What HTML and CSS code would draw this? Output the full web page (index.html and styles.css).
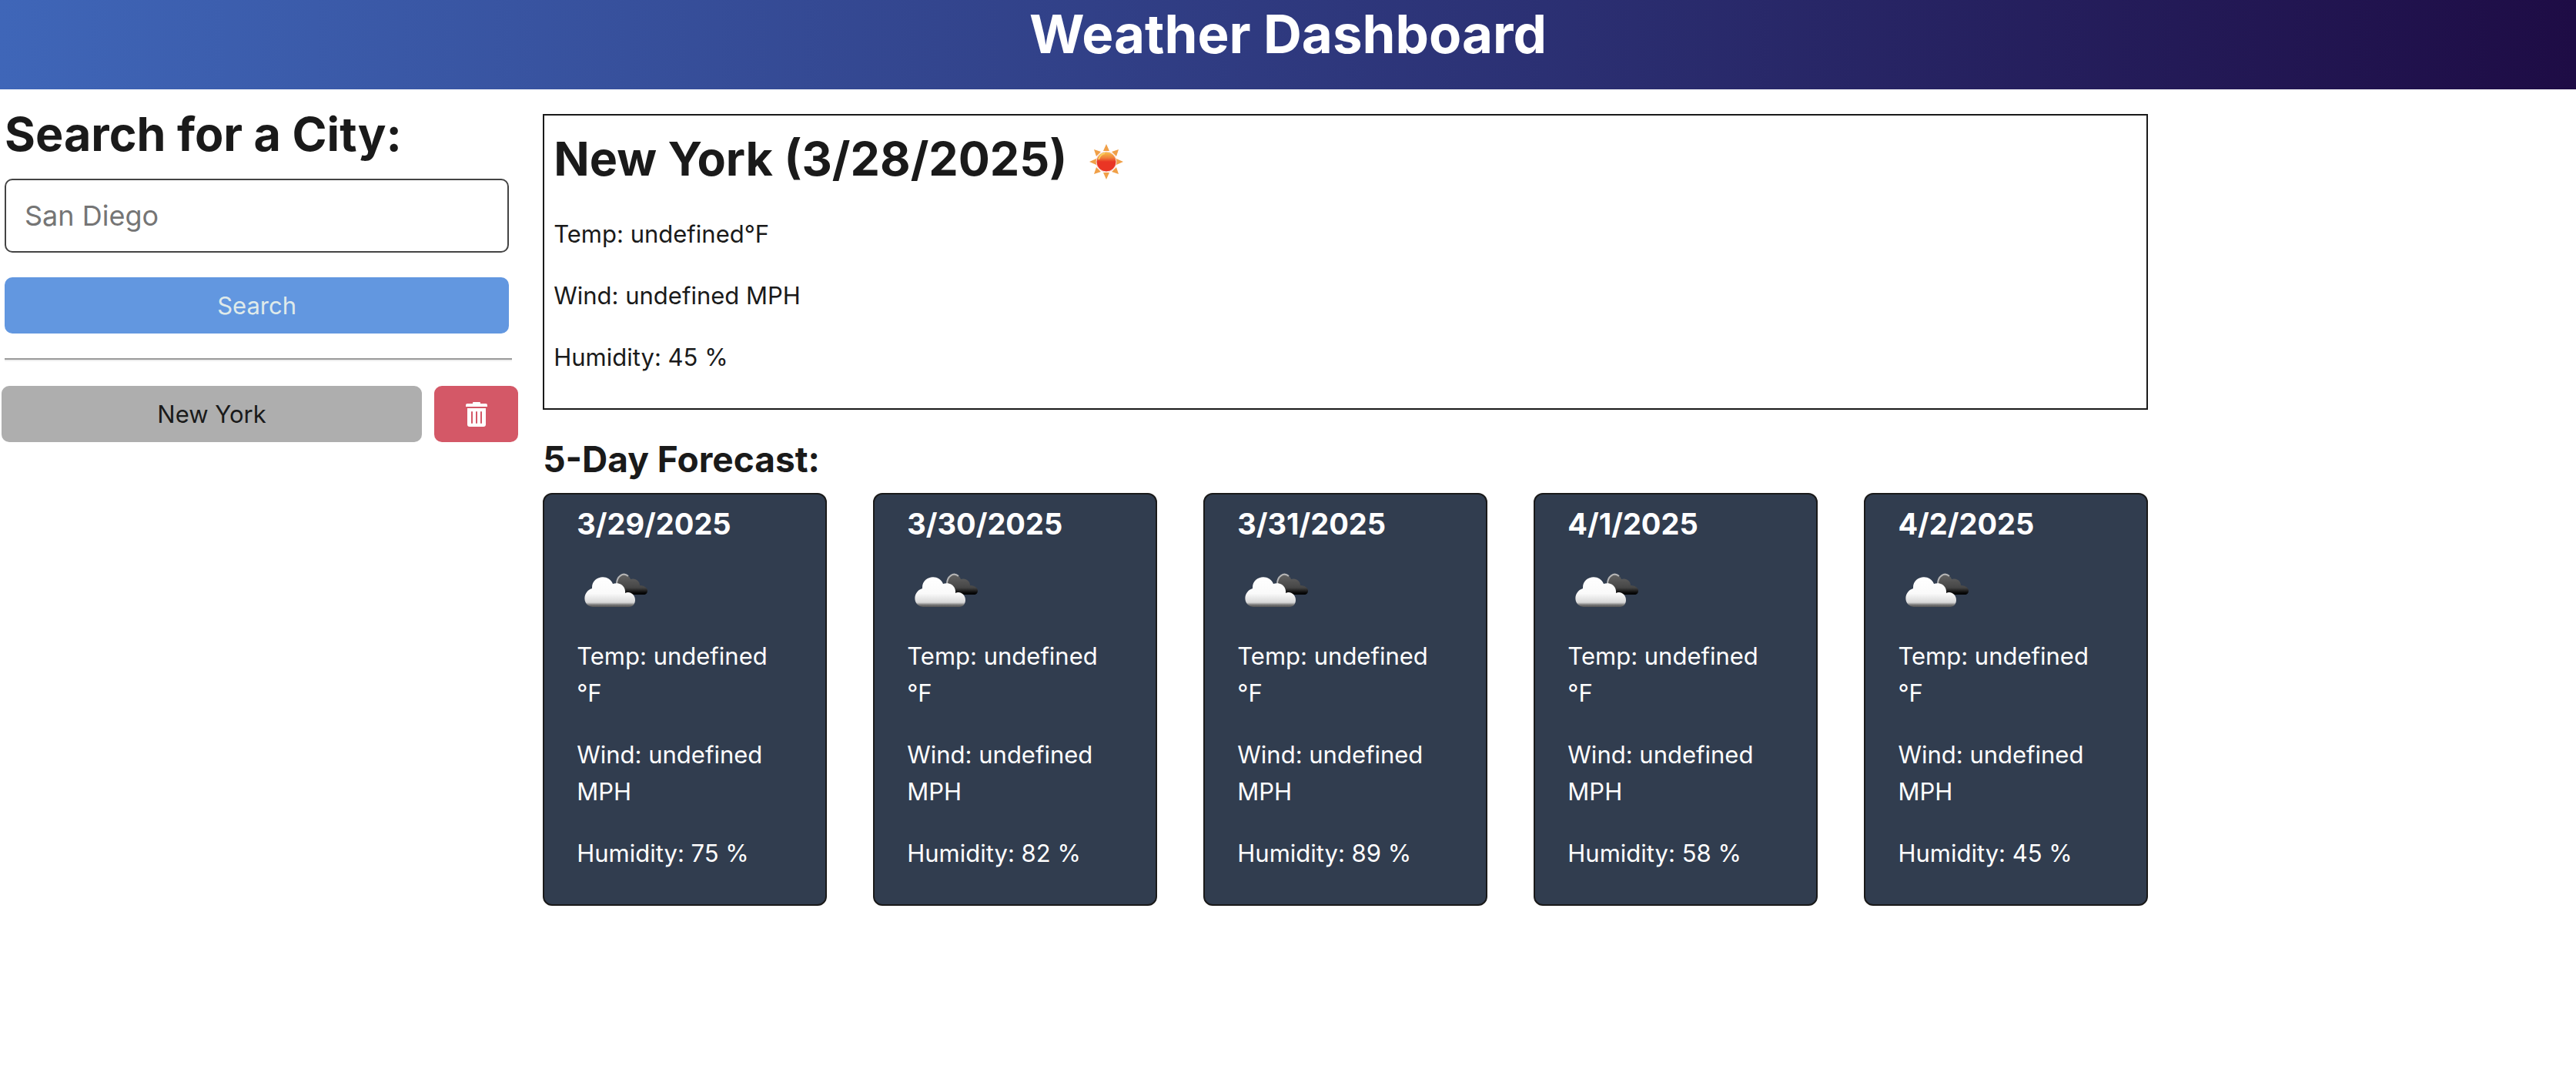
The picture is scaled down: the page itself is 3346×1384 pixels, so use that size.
FILE: index.html
```html
<!DOCTYPE html>
<html lang="en">
<head>
<meta charset="utf-8">
<meta name="viewport" content="width=device-width, initial-scale=1">
<title>Weather Dashboard</title>
<link rel="stylesheet" href="styles.css">
</head>
<body>
<svg class="defs" aria-hidden="true">
  <defs>
    <linearGradient id="cloud-light" x1="0" y1="0" x2="0" y2="1">
      <stop offset="0" stop-color="#fff"/><stop offset=".55" stop-color="#fafafa"/>
      <stop offset=".85" stop-color="#d8d8d8"/><stop offset=".93" stop-color="#777"/><stop offset="1" stop-color="#555"/>
    </linearGradient>
    <linearGradient id="cloud-dark" x1="0" y1="0" x2="0" y2="1">
      <stop offset="0" stop-color="#626262"/><stop offset=".65" stop-color="#464646"/><stop offset=".9" stop-color="#0a0a0a"/><stop offset="1" stop-color="#000"/>
    </linearGradient>
    <symbol id="clouds" viewBox="0 0 84 44">
      <path d="M43 14C42 6 46 2 51 2c5 0 8 3 9 6 6-2 12 2 12 8 5 0 10 3 10 7 0 3-2 5-5 5H54z" fill="url(#cloud-dark)"/>
      <path d="M42 14C42 5 50-2 57 4" fill="none" stroke="#b5b5b5" stroke-width="2"/>
      <path d="M11 44C-3 43-3 24 10 20 9 3 32 0 37 14c8-3 17 2 16 12 6-3 13 2 13 9 0 5-3 9-8 9z" fill="url(#cloud-light)"/>
    </symbol>
  </defs>
</svg>
<header class="page-header"><h1 class="page-title">Weather Dashboard</h1></header>
<div class="layout">
  <aside class="sidebar">
    <form class="search-form">
      <label class="heading" for="city">Search for a City:</label>
      <input class="search-input" id="city" type="text" placeholder="San Diego">
      <button class="btn btn-search" type="button">Search</button>
    </form>
    <hr class="divider">
    <div class="history">
      <button class="btn btn-city" type="button">New York</button>
      <button class="btn btn-delete" type="button" aria-label="Delete New York">
        <svg class="trash" viewBox="0 0 28 32" aria-hidden="true">
          <path fill="#fff" d="M2 2h7V1q0-1 1-1h8q1 0 1 1v1h7q2 0 2 2v2H0V4q0-2 2-2z"/>
          <path fill="#fff" d="M2 8h24v21q0 3-3 3H5q-3 0-3-3z"/>
          <path stroke="#d45867" stroke-width="2" stroke-linecap="round" d="M8 13v14M14 13v14M20 13v14"/>
        </svg>
      </button>
    </div>
  </aside>
  <main class="content">
    <section class="today">
      <h2 class="heading today-title">New York (3/28/2025)
        <svg class="sun" viewBox="0 0 46 48" aria-hidden="true">
          <defs><linearGradient id="sun-fill" x1="0" y1="0" x2="0" y2="1">
            <stop offset="0" stop-color="#f8c34a"/><stop offset=".3" stop-color="#f0813a"/><stop offset=".5" stop-color="#e93524"/><stop offset="1" stop-color="#e93524"/>
          </linearGradient></defs>
          <path fill="#f0a048" d="M23 1l4 9h-8zM23 47l4-9h-8zM1 24l9-4v8zM45 24l-9-4v8zM7 8l9 3-6 6zM39 8l-9 3 6 6zM7 40l9-3-6-6zM39 40l-9-3 6-6z"/>
          <circle cx="23" cy="24" r="13" fill="url(#sun-fill)" stroke="#f8d8d0" stroke-width="1"/>
          <path d="M13 21q2-7 8-8" fill="none" stroke="#f8d060" stroke-width="2"/>
        </svg>
      </h2>
      <p class="reading">Temp: undefined°F</p>
      <p class="reading">Wind: undefined MPH</p>
      <p class="reading">Humidity: 45 %</p>
    </section>
    <section>
      <h3 class="forecast-title">5-Day Forecast:</h3>
      <div class="forecast">
        <article class="card">
          <h4 class="card-date">3/29/2025</h4>
          <svg class="clouds" aria-hidden="true"><use href="#clouds"/></svg>
          <p class="reading">Temp: undefined °F</p><p class="reading">Wind: undefined MPH</p><p class="reading">Humidity: 75 %</p>
        </article>
        <article class="card">
          <h4 class="card-date">3/30/2025</h4>
          <svg class="clouds" aria-hidden="true"><use href="#clouds"/></svg>
          <p class="reading">Temp: undefined °F</p><p class="reading">Wind: undefined MPH</p><p class="reading">Humidity: 82 %</p>
        </article>
        <article class="card">
          <h4 class="card-date">3/31/2025</h4>
          <svg class="clouds" aria-hidden="true"><use href="#clouds"/></svg>
          <p class="reading">Temp: undefined °F</p><p class="reading">Wind: undefined MPH</p><p class="reading">Humidity: 89 %</p>
        </article>
        <article class="card">
          <h4 class="card-date">4/1/2025</h4>
          <svg class="clouds" aria-hidden="true"><use href="#clouds"/></svg>
          <p class="reading">Temp: undefined °F</p><p class="reading">Wind: undefined MPH</p><p class="reading">Humidity: 58 %</p>
        </article>
        <article class="card">
          <h4 class="card-date">4/2/2025</h4>
          <svg class="clouds" aria-hidden="true"><use href="#clouds"/></svg>
          <p class="reading">Temp: undefined °F</p><p class="reading">Wind: undefined MPH</p><p class="reading">Humidity: 45 %</p>
        </article>
      </div>
    </section>
  </main>
</div>
</body>
</html>
```
FILE: styles.css
```css
* { box-sizing: border-box; }
body {
  margin: 0;
  background: #fff;
  color: #1a1a1a;
  font: 31px/48px Inter, "Liberation Sans", sans-serif;
}
h1, h2, h3, h4, p { margin: 0; }
.defs { display: block; width: 0; height: 0; }
.page-header {
  padding-bottom: 28px;
  background: linear-gradient(90deg, #3f66b8, #1e0c45);
  color: #fff;
  text-align: center;
}
.page-title { font-size: 69px; line-height: 88px; font-weight: 700; }
.layout {
  display: grid;
  grid-template-columns: 20.120% 62.320%;
  column-gap: 32px;
  align-items: start;
}
.heading { font-size: 61px; line-height: 80px; font-weight: 700; }
.sidebar { padding-top: 18px; }
.search-form {
  display: flex;
  flex-direction: column;
  padding: 0 12px 0 6px;
}
.search-input {
  height: 96px;
  margin: 18px 0 32px;
  padding: 0 24px;
  border: 2px solid #444;
  border-radius: 10px;
  background: #fff;
  color: #1a1a1a;
  font: inherit;
  font-size: 36px;
}
.search-input::placeholder { color: #757575; opacity: 1; }
.btn {
  height: 73px;
  padding: 0;
  border: 0;
  border-radius: 10px;
  font: inherit;
}
.btn-search { background: #6297e0; color: #dfeaea; }
.divider {
  height: 4px;
  margin: 32px 8px 32px 6px;
  border: 0;
  border-top: 2px solid #9a9a9a;
  border-bottom: 2px solid #eee;
}
.history {
  display: grid;
  grid-template-columns: 5fr 1fr;
  gap: 16px;
  padding-left: 2px;
}
.btn-city { background: #aeaeae; color: #1a1a1a; }
.btn-delete { display: flex; align-items: center; justify-content: center; background: #d45867; }
.trash { width: 28px; height: 32px; }
.content { padding-top: 32px; }
.today { padding: 16px 12px 42px; border: 2px solid #1a1a1a; }
.today-title { display: flex; align-items: center; gap: 28px; margin-bottom: 34px; }
.sun { width: 46px; height: 48px; margin-top: 8px; }
.reading + .reading { margin-top: 32px; }
.forecast-title { margin: 34px 0 14px; font-size: 46px; line-height: 60px; font-weight: 700; }
.forecast { display: grid; grid-template-columns: repeat(5, 1fr); gap: 60px; }
.card {
  padding: 12px 42px 42px;
  border: 2px solid #1a1a1a;
  border-radius: 12px;
  background: #313d4f;
  color: #fff;
}
.card-date { font-size: 38px; line-height: 52px; font-weight: 700; }
.clouds { display: block; width: 84px; height: 44px; margin: 38px 10px 40px; }
```
